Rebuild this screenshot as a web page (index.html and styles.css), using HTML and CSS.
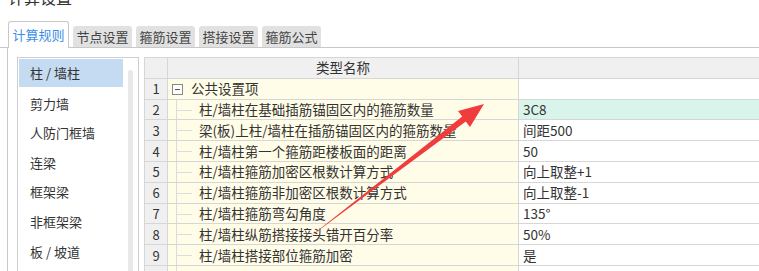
FILE: index.html
```html
<!DOCTYPE html>
<html lang="zh-CN">
<head>
    <meta charset="UTF-8">
    <title>计算设置</title>
    <link rel="stylesheet" href="styles.css">
</head>
<body>
    <div class="title">计算设置</div>
    <div class="tabs">
        <div class="tab active">计算规则</div>
        <div class="tab">节点设置</div>
        <div class="tab">箍筋设置</div>
        <div class="tab">搭接设置</div>
        <div class="tab">箍筋公式</div>
    </div>
    <div class="panel">
        <div class="list">
            <div class="item selected">柱 / 墙柱</div>
            <div class="item">剪力墙</div>
            <div class="item">人防门框墙</div>
            <div class="item">连梁</div>
            <div class="item">框架梁</div>
            <div class="item">非框架梁</div>
            <div class="item">板 / 坡道</div>
            <div class="scroll"></div>
        </div>
        <div class="grid">
            <table>
                <colgroup>
                    <col class="c-num">
                    <col class="c-name">
                    <col class="c-val">
                </colgroup>
                <tr class="head">
                    <th></th>
                    <th>类型名称</th>
                    <th></th>
                </tr>
                <tr>
                    <td class="num">1</td>
                    <td class="name group"><span class="minus"></span>公共设置项</td>
                    <td class="val"></td>
                </tr>
                <tr>
                    <td class="num">2</td>
                    <td class="name child">柱/墙柱在基础插筋锚固区内的箍筋数量</td>
                    <td class="val hl">3C8</td>
                </tr>
                <tr>
                    <td class="num">3</td>
                    <td class="name child">梁(板)上柱/墙柱在插筋锚固区内的箍筋数量</td>
                    <td class="val">间距500</td>
                </tr>
                <tr>
                    <td class="num">4</td>
                    <td class="name child">柱/墙柱第一个箍筋距楼板面的距离</td>
                    <td class="val">50</td>
                </tr>
                <tr>
                    <td class="num">5</td>
                    <td class="name child">柱/墙柱箍筋加密区根数计算方式</td>
                    <td class="val">向上取整+1</td>
                </tr>
                <tr>
                    <td class="num">6</td>
                    <td class="name child">柱/墙柱箍筋非加密区根数计算方式</td>
                    <td class="val">向上取整-1</td>
                </tr>
                <tr>
                    <td class="num">7</td>
                    <td class="name child">柱/墙柱箍筋弯勾角度</td>
                    <td class="val">135°</td>
                </tr>
                <tr>
                    <td class="num">8</td>
                    <td class="name child">柱/墙柱纵筋搭接接头错开百分率</td>
                    <td class="val">50%</td>
                </tr>
                <tr>
                    <td class="num">9</td>
                    <td class="name child">柱/墙柱搭接部位箍筋加密</td>
                    <td class="val">是</td>
                </tr>
                <tr>
                    <td class="num"></td>
                    <td class="name child"></td>
                    <td class="val"></td>
                </tr>
            </table>
        </div>
    </div>
    <svg class="arrow" width="759" height="271" viewBox="0 0 759 271">
        <polygon points="307,239 462.2,116.6 458,111 484,104 470,127 465.8,121.4" fill="#f03c3c"/>
    </svg>
</body>
</html>
```

FILE: styles.css
```css
body {
    margin: 0;
    font-family: "Noto Sans CJK SC", "Noto Sans", sans-serif;
    font-size: 13px;
    color: #333;
    background: #fff;
    overflow: hidden;
    width: 759px;
    height: 271px;
    position: relative;
}
.title {
    font-size: 16px;
    line-height: 20px;
    margin-top: -13px;
    padding-left: 8px;
    color: #333;
}
.tabs {
    display: flex;
    align-items: flex-end;
    gap: 4px;
    height: 25px;
    margin-top: 15px;
    padding-left: 8px;
    border-bottom: 1px solid #c8c8c8;
}
.tab {
    width: 59px;
    height: 21px;
    line-height: 21px;
    text-align: center;
    background: #e1e1e1;
    color: #444;
    border-radius: 3px 3px 0 0;
}
.tab.active {
    width: 59px;
    height: 26px;
    line-height: 26px;
    background: #fff;
    color: #3a8ee6;
    border: 1px solid #c8c8c8;
    border-bottom: none;
    margin-bottom: -1px;
}
.panel {
    display: flex;
    margin-left: 7px;
    border-left: 1px solid #c8c8c8;
    padding: 9px 0 0 9px;
    height: 214px;
    gap: 5px;
}
.list {
    position: relative;
    width: 119px;
    border: 1px solid #cfcfcf;
    border-bottom: none;
    padding: 1px 0 0 1px;
    flex: none;
    overflow: hidden;
}
.item {
    width: 93px;
    height: 29.6px;
    line-height: 29px;
    padding-left: 11px;
    color: #333;
}
.item.selected {
    height: 28px;
    line-height: 28px;
    background: #c5dbf2;
    margin-bottom: 1.6px;
}
.scroll {
    position: absolute;
    left: 110px;
    top: 12px;
    bottom: 0;
    width: 5px;
    background: #e8e8e8;
    border-radius: 3px 3px 0 0;
}
.grid {
    flex: none;
    width: 620px;
    overflow: hidden;
}
table {
    border-collapse: collapse;
    table-layout: fixed;
    width: 620px;
}
.c-num { width: 23px; }
.c-name { width: 351px; }
.c-val { width: 246px; }
tr {
    height: 20.8px;
}
th, td {
    border: 1px solid #d6d6d6;
    padding: 0;
    line-height: 17px;
    font-size: 13.5px;
    font-weight: normal;
    white-space: nowrap;
    overflow: hidden;
}
th {
    background: #f0f0f0;
    color: #333;
}
.num {
    background: #f0f0f0;
    text-align: center;
    font-size: 13px;
}
.name {
    background: #fffce7;
    position: relative;
}
.group {
    padding-left: 4px;
}
.minus {
    display: inline-block;
    width: 9px;
    height: 9px;
    border: 1px solid #888;
    vertical-align: -1px;
    margin-right: 8px;
    position: relative;
    background: #fff;
}
.minus::after {
    content: "";
    position: absolute;
    left: 2px;
    top: 4px;
    width: 5px;
    height: 1px;
    background: #555;
}
.child {
    padding-left: 31px;
}
.child::before {
    content: "";
    position: absolute;
    left: 8px;
    top: -1px;
    bottom: -1px;
    border-left: 1px solid #dcdcdc;
}
.child::after {
    content: "";
    position: absolute;
    left: 9px;
    top: 10px;
    width: 15px;
    border-top: 1px solid #dcdcdc;
}
.val {
    background: #fff;
    padding-left: 4px;
}
.val.hl {
    background: #d9f4ea;
}
.arrow {
    position: absolute;
    left: 0;
    top: 0;
    pointer-events: none;
}
```
